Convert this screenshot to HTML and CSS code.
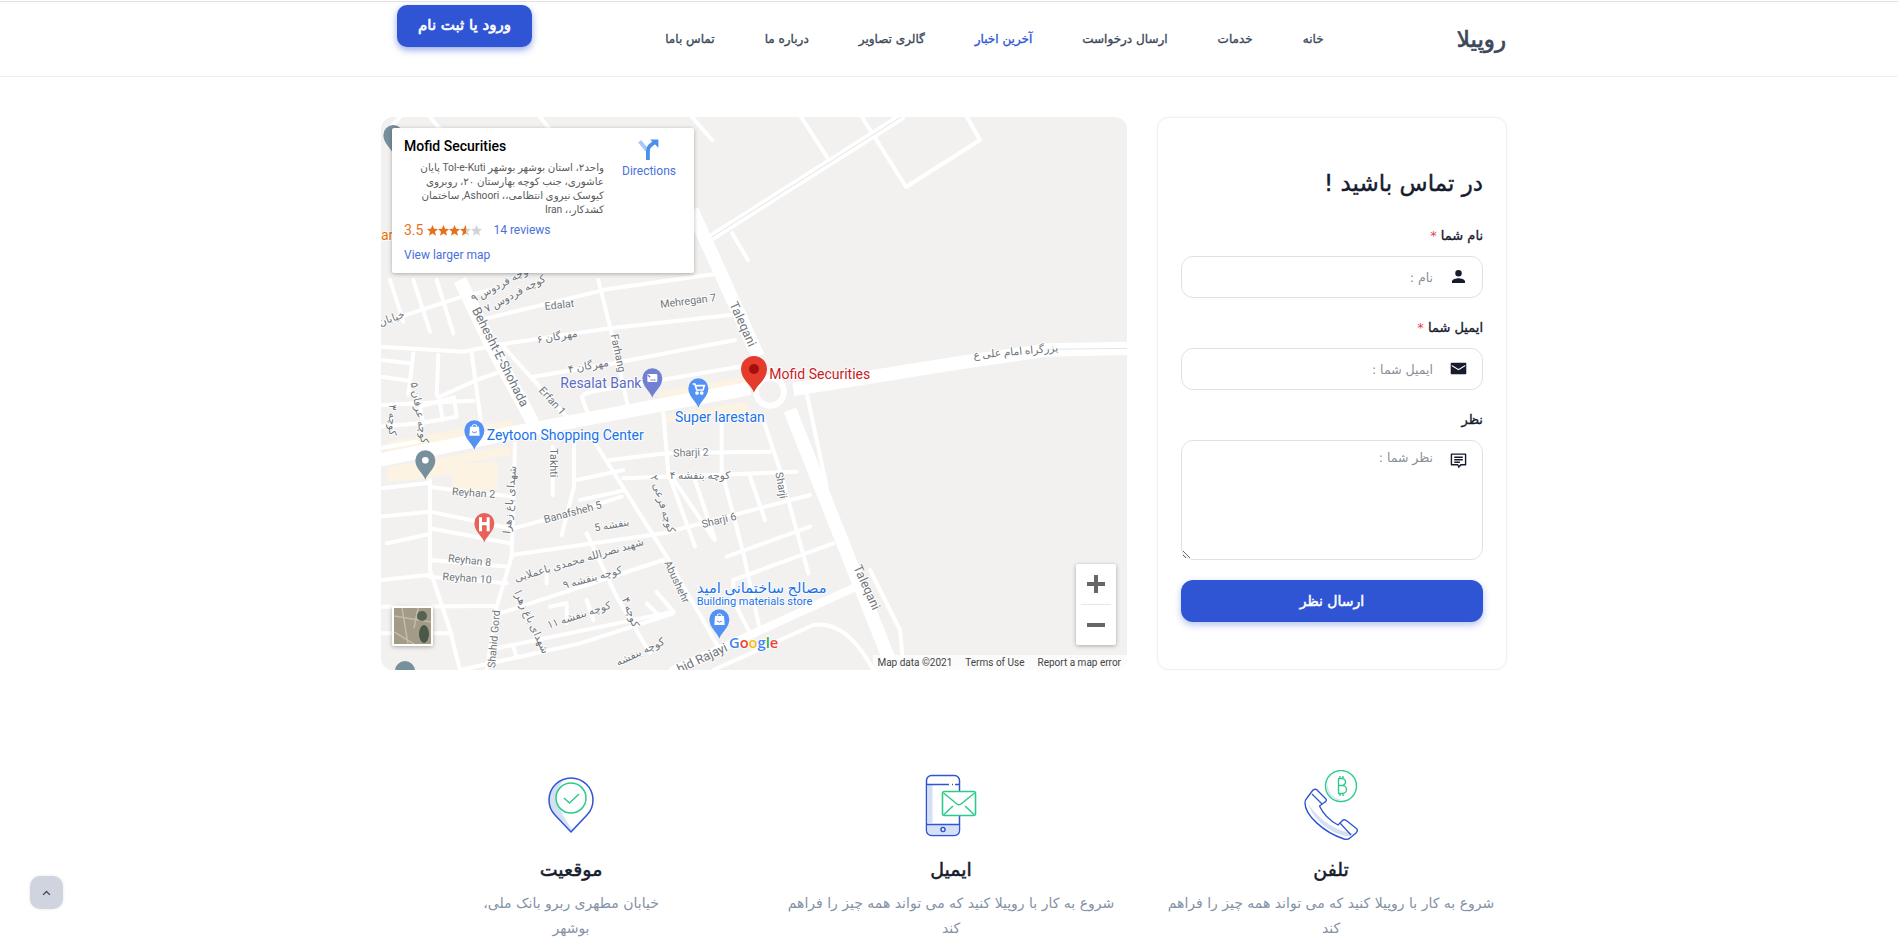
FILE: index.html
```html
<!DOCTYPE html>
<html lang="fa" dir="rtl">
<head>
<meta charset="utf-8">
<title>روپیلا</title>
<link rel="stylesheet" href="styles.css">
</head>
<body>
<header class="header">
  <a class="logo">روپیلا</a>
  <nav class="nav">
    <a>خانه</a><a>خدمات</a><a>ارسال درخواست</a><a class="active">آخرین اخبار</a><a>گالری تصاویر</a><a>درباره ما</a><a>تماس باما</a>
  </nav>
  <button class="login">ورود یا ثبت نام</button>
</header>

<main class="contact">
  <form class="card">
    <h2 class="card-title">در تماس باشید !</h2>
    <label class="field-label">نام شما <span class="req">*</span></label>
    <div class="field">
      <svg class="field-icon" viewBox="0 0 24 24"><path d="M12 12a4.6 4.6 0 1 0 0-9.2A4.6 4.6 0 0 0 12 12zm0 2.3c-3.1 0-9.2 1.5-9.2 4.6v2.3h18.4v-2.3c0-3.1-6.1-4.6-9.2-4.6z"/></svg>
      <input class="control" placeholder="نام :">
    </div>
    <label class="field-label">ایمیل شما <span class="req">*</span></label>
    <div class="field">
      <svg class="field-icon" viewBox="0 0 24 24"><path d="M2 4h20a1 1 0 0 1 1 1v14a1 1 0 0 1-1 1H2a1 1 0 0 1-1-1V5a1 1 0 0 1 1-1zm.5 3.2v1.6l9.5 5.7 9.5-5.7V7.2L12 12.6z"/></svg>
      <input class="control" placeholder="ایمیل شما :">
    </div>
    <label class="field-label">نظر</label>
    <div class="field">
      <svg class="field-icon" viewBox="0 0 24 24"><path fill-rule="evenodd" d="M2 2h20a1 1 0 0 1 1 1v15a1 1 0 0 1-1 1h-6l-4 4-1.500-4H2a1 1 0 0 1-1-1V3a1 1 0 0 1 1-1zm1 2v13h8.500l1 2.500 2.500-2.500h6V4zm3 2.500h12v2H6zm0 3.500h12v2H6zm0 3.500h8v2H6z"/></svg>
      <textarea class="control area" placeholder="نظر شما :"></textarea>
    </div>
    <button class="submit" type="button">ارسال نظر</button>
  </form>

  <section class="map" dir="ltr">
    <svg class="map-svg" viewBox="3 -489 2238 1659" preserveAspectRatio="none">
      <defs>
        <path id="pin" d="M0,88 C-6,70 -30,55 -30,30 A30,30 0 1 1 30,30 C30,55 6,70 0,88Z"/>
      </defs>
      <rect x="3" y="-489" width="2238" height="1659" fill="#f2f1f0"/>

      <g class="cream">
        <polygon points="25,485 392,420 415,440 30,515"/>
        <polygon points="20,562 392,497 392,525 240,552 352,545 352,628 218,628 215,582 90,600 25,605"/>
        <polygon points="836,335 1092,292 1100,312 840,364"/>
        <polygon points="855,405 1102,366 1102,396 860,428"/>
      </g>

      <g class="rd thin">
        <path d="M30,0 L70,125 M100,0 L150,155 M170,0 L220,160"/>
        <path d="M0,130 L240,52 L330,30 M320,115 L680,28 L1020,-20"/>
        <path d="M0,200 L250,215 L350,195 L690,145 L1050,105"/>
        <path d="M460,290 L700,250 L1065,180"/>
        <path d="M610,345 Q620,335 700,325 L1090,258"/>
        <path d="M100,220 L85,345 M175,225 L170,345 M275,220 L302,420"/>
        <path d="M0,240 L90,250 M0,290 L90,302 M0,375 L280,362 M175,352 L290,300 L370,272"/>
        <path d="M0,440 L120,430 L230,410 L222,352 L120,380 L130,430 M180,372 L188,420"/>
        <path d="M0,505 L110,485"/>
        <path d="M370,200 L560,410"/>
        <path d="M655,0 L690,140 L745,385"/>
        <path d="M605,350 L625,405"/>
        <path d="M150,600 L150,870 L210,1050 L240,1170"/>
        <path d="M0,625 L150,608 M155,622 L400,650 M0,710 L150,695 L390,745 M150,745 L390,790 M20,790 L150,762 M150,840 L385,860 M145,890 L380,910 M0,900 L145,885 M0,980 L350,978 M0,1060 L215,1060"/>
        <path d="M405,490 L395,830 L350,980 L320,1170"/>
        <path d="M395,825 L850,760 L1290,645"/>
        <path d="M400,745 L550,705 L725,650 M590,600 L730,570 M600,660 L730,632"/>
        <path d="M582,490 L582,620 L545,765"/>
        <path d="M518,500 L518,645"/>
        <path d="M640,480 L860,830 L1020,1110"/>
        <path d="M690,540 L860,520 L1170,515 M730,595 L1250,575"/>
        <path d="M850,400 L865,580 L945,800 M1025,420 L1025,570 L1090,820 L1140,1050 M1150,420 L1200,570 L1285,880 M875,590 L1000,775 M945,600 L1005,780 M1110,590 L1155,720"/>
        <path d="M1040,830 L1290,740 M1060,900 L1360,790 M1060,900 L1060,960 L1110,1060"/>
        <path d="M360,1000 L850,840 M620,760 L710,950 L810,1120 M350,1105 L880,995 L830,935 M510,980 L560,970 L560,1030 M620,960 L640,1020 M800,970 L840,1010"/>
        <path d="M240,1170 L600,1090 L880,1000"/>
        <path d="M400,1100 L410,1130 M500,880 L500,910"/>
        <path d="M1000,1170 L1300,1035 Q1400,1020 1480,1170"/>
        <path d="M1280,340 L1340,620"/>
        <path d="M1470,870 L1560,1050 L1570,1160"/>
        <path d="M1263,-489 L1341,-369 M1446,-489 L1578,-279 L1800,-420 L1761,-489 M936,-489 L996,-420"/>
        <path d="M1056,-141 L1104,-60"/>
        <path d="M15,-440 L60,-489 M150,-489 L190,-440 M480,-489 L520,-440"/>
        <path d="M780,-70 L930,-110"/>
      </g>

      <g class="rd wide">
        <path d="M0,540 L430,452 L1110,325"/>
        <path d="M240,0 L330,190 L460,430"/>
        <path d="M1230,390 L1540,1170"/>
        <path d="M936,-210 L1135,230"/>
        <path d="M1240,328 L1740,248 L2000,210 L2241,205"/>
      </g>
      <path class="rd mid" d="M880,1170 L1440,915"/>
      <path class="rd mid" d="M1563,-489 L996,-129"/>
      <path class="rd hair" d="M1563,-489 L996,-129 M2000,208 L2241,205"/>
      <circle cx="1170" cy="335" r="42" fill="#f2f1f0" stroke="#fff" stroke-width="18"/>

      <g class="lbl">
        <text x="495" y="90" transform="rotate(-6 495 90)">Edalat</text>
        <text x="842" y="84" transform="rotate(-7 842 84)">Mehregan 7</text>
        <text x="275" y="90" class="big" transform="rotate(63 275 90)">Behesht-E-Shohada</text>
        <text x="1048" y="72" class="big" transform="rotate(66 1048 72)">Taleqani</text>
        <text x="1420" y="862" class="big" transform="rotate(66 1420 862)">Taleqani</text>
        <text x="692" y="165" transform="rotate(78 692 165)">Farhang</text>
        <text x="475" y="332" transform="rotate(48 475 332)">Erfan 1</text>
        <text x="215" y="645" transform="rotate(4 215 645)">Reyhan 2</text>
        <text x="203" y="845" transform="rotate(6 203 845)">Reyhan 8</text>
        <text x="187" y="900" transform="rotate(4 187 900)">Reyhan 10</text>
        <text x="510" y="505" transform="rotate(90 510 505)">Takhti</text>
        <text x="495" y="730" transform="rotate(-15 495 730)">Banafsheh 5</text>
        <text x="880" y="530" transform="rotate(-2 880 530)">Sharji 2</text>
        <text x="968" y="744" transform="rotate(-14 968 744)">Sharji 6</text>
        <text x="1186" y="578" transform="rotate(80 1186 578)">Sharji</text>
        <text x="852" y="848" transform="rotate(65 852 848)">Abushehr</text>
        <text x="345" y="1165" transform="rotate(-85 345 1165)">Shahid Gord</text>
        <text x="1045" y="1112" text-anchor="end" class="big" transform="rotate(-25 1045 1112)">hid Rajayi</text>
        <g text-anchor="middle" direction="rtl">
          <text x="370" y="20" transform="rotate(-28 370 20)">کوچه فردوس ۹</text>
          <text x="410" y="50" transform="rotate(-28 410 50)">کوچه فردوس ۷</text>
          <text x="38" y="125" transform="rotate(-20 38 125)">خیابان</text>
          <text x="533" y="180" transform="rotate(-10 533 180)">مهرگان ۶</text>
          <text x="627" y="268" transform="rotate(-10 627 268)">مهرگان ۴</text>
          <text x="108" y="400" transform="rotate(80 108 400)">کوچه عرفان ۵</text>
          <text x="26" y="420" transform="rotate(90 26 420)">کوچه ۳</text>
          <text x="400" y="660" transform="rotate(-85 400 660)">شهدای باغ زهرا</text>
          <text x="445" y="1030" transform="rotate(65 445 1030)">شهدای باغ زهرا</text>
          <text x="697" y="745" transform="rotate(-10 697 745)">بنفشه 5</text>
          <text x="960" y="597">کوچه بنفشه ۴</text>
          <text x="838" y="675" transform="rotate(72 838 675)">کوچه فرعی ۲</text>
          <text x="600" y="850" transform="rotate(-16 600 850)">شهید نصرالله محمدی باعملایی</text>
          <text x="640" y="903" transform="rotate(-15 640 903)">کوچه بنفشه ۹</text>
          <text x="600" y="1015" transform="rotate(-18 600 1015)">کوچه بنفشه ۱۱</text>
          <text x="742" y="1000" transform="rotate(70 742 1000)">کوچه ۴</text>
          <text x="785" y="1125" transform="rotate(-25 785 1125)">کوچه بنفشه</text>
          <text x="1908" y="225" transform="rotate(-5 1908 225)">بزرگراه امام علی ع</text>
        </g>
      </g>

      <g class="poi">
        <use href="#pin" x="817" y="265" fill="#7180cf"/>
        <use href="#pin" x="955" y="295" fill="#5491f5"/>
        <use href="#pin" x="283" y="421" fill="#5491f5"/>
        <use href="#pin" x="136" y="511" fill="#78909c"/>
        <use href="#pin" x="313" y="699" fill="#e8615a"/>
        <use href="#pin" x="1018" y="988" fill="#5491f5"/>
        <use href="#pin" x="75" y="1143" fill="#78909c"/>
        <use href="#pin" x="40" y="-465" fill="#78909c"/>
        <circle cx="136" cy="541" r="10" fill="#fff"/>
        <path d="M297,712 h9 v14 h14 v-14 h9 v42 h-9 v-18 h-14 v18 h-9z" fill="#fff"/>
        <rect x="802" y="282" width="30" height="24" rx="3" fill="#fff"/>
        <path d="M803,285 l8,7" stroke="#7180cf" stroke-width="4"/>
        <path d="M812,300 h16" stroke="#7180cf" stroke-width="4" stroke-dasharray="3 2"/>
        <path d="M938,312 h7 l5,18 h19 l4,-13 h-24 M951,336 a3,3 0 1 0 .1,0 M965,336 a3,3 0 1 0 .1,0" fill="none" stroke="#fff" stroke-width="5"/>
        <g fill="#fff">
          <path d="M270,440 h27 l2,27 h-31z"/>
          <path d="M1005,1008 h27 l2,27 h-31z"/>
        </g>
        <g fill="none" stroke="#fff" stroke-width="3">
          <path d="M276,441 a7,7 0 0 1 15,0"/>
          <path d="M1011,1009 a7,7 0 0 1 15,0"/>
        </g>
        <g fill="none" stroke="#5491f5" stroke-width="3">
          <path d="M276,455 q7,7 15,0"/>
          <path d="M1011,1023 q7,7 15,0"/>
        </g>
        <path d="M1122,338 C1115,315 1083,300 1083,267 A39,39 0 1 1 1161,267 C1161,300 1129,315 1122,338Z" fill="#e53b2d"/>
        <circle cx="1122" cy="267" r="15" fill="#a30f0c"/>
      </g>

      <g class="plab">
        <text x="541" y="323" fill="#5c6bc0">Resalat Bank</text>
        <text x="885" y="426" fill="#1a73e8">Super larestan</text>
        <text x="320" y="480" fill="#1a73e8">Zeytoon Shopping Center</text>
        <text x="1168" y="296" fill="#c5221f">Mofid Securities</text>
        <text x="1145" y="940" text-anchor="middle" direction="rtl" class="fa" fill="#1a73e8">مصالح ساختمانی امید</text>
        <text x="950" y="974" class="small" fill="#1a73e8">Building materials store</text>
        <text x="3" y="-120" fill="#e8710a">ar</text>
      </g>

      <text class="google" x="1047" y="1104"><tspan fill="#4285f4">G</tspan><tspan fill="#ea4335">o</tspan><tspan fill="#fbbc05">o</tspan><tspan fill="#4285f4">g</tspan><tspan fill="#34a853">l</tspan><tspan fill="#ea4335">e</tspan></text>
    </svg>

    <div class="info">
      <div class="info-main">
        <div class="info-title">Mofid Securities</div>
        <div class="info-addr" dir="rtl">واحد۲، استان بوشهر بوشهر Tol-e-Kuti پایان<br>عاشوری، جنب کوچه بهارستان ۲۰، روبروی<br>کیوسک نیروی انتظامی،، Ashoori, ساختمان<br>کشدکار،، Iran</div>
        <div class="info-rate">
          <span class="score">3.5</span>
          <svg class="stars" viewBox="0 0 55 11">
            <defs>
              <linearGradient id="half"><stop offset="50%" stop-color="#e7711b"/><stop offset="50%" stop-color="#d2d2d2"/></linearGradient>
              <polygon id="st" points="5.500,0 7.100,3.800 11,4.100 8,6.700 9,10.700 5.500,8.500 2,10.700 3,6.700 0,4.100 3.900,3.800"/>
            </defs>
            <use href="#st" fill="#e7711b"/>
            <use href="#st" x="11" fill="#e7711b"/>
            <use href="#st" x="22" fill="#e7711b"/>
            <use href="#st" x="33" fill="url(#half)"/>
            <use href="#st" x="44" fill="#d2d2d2"/>
          </svg>
          <a class="link reviews">14 reviews</a>
        </div>
        <a class="link larger">View larger map</a>
      </div>
      <div class="info-dir">
        <svg class="dir-icon" viewBox="0 0 20 20">
          <path d="M1.500,2 L8,10" stroke="#a8c7fa" stroke-width="3.500" fill="none"/>
          <path d="M9,19 V11 Q9,8 11,6 L15,3" stroke="#4a90ea" stroke-width="3.500" fill="none"/>
          <polygon points="11,0.500 18.500,0.500 18.500,8" fill="#4a90ea"/>
        </svg>
        <a class="link">Directions</a>
      </div>
    </div>

    <div class="thumb">
      <svg viewBox="0 0 37 36" class="thumb-svg">
        <rect width="37" height="36" fill="#a39b88"/>
        <path d="M0,8 L37,14 M8,0 L14,36 M0,24 L20,36 M24,0 L20,20" stroke="#c2bbaa" stroke-width="1.500"/>
        <ellipse cx="28" cy="8" rx="5" ry="5" fill="#566250"/>
        <ellipse cx="30" cy="26" rx="5" ry="9" fill="#4a5848"/>
      </svg>
    </div>

    <div class="zoom">
      <span class="zoom-btn">
        <svg viewBox="0 0 18 18" class="zoom-ico"><path d="M7 0h4v7h7v4h-7v7H7v-7H0V7h7z"/></svg>
      </span>
      <span class="zoom-line"></span>
      <span class="zoom-btn">
        <svg viewBox="0 0 18 18" class="zoom-ico"><path d="M0 7h18v4H0z"/></svg>
      </span>
    </div>

    <div class="attr"><span>Map data ©2021</span><span>Terms of Use</span><span>Report a map error</span></div>
  </section>
</main>

<section class="features">
  <article class="feature">
    <svg class="f-icon" viewBox="0 0 70 70">
      <circle cx="45" cy="16" r="15.500" fill="#fff" stroke="#2eca8b" stroke-width="1.400"/>
      <path d="M31.500,13 C31,22 38,30 48,30 C40,32 28,25 31.500,13Z" fill="#d6e0f5"/>
      <path d="M42,8.500 h4 a3.200,3.200 0 0 1 0,7 h-4 M46,15.500 h.5 a3.800,3.800 0 0 1 0,8 h-4.500 M42.500,8.500 v15 M44,6 v2.500 M47,6 v2.500 M44,23.500 v2.500 M47,23.500 v2.500" fill="none" stroke="#2eca8b" stroke-width="1.400"/>
      <g transform="translate(2 0)">
        <path d="M9,28 L15,20 Q18,18 20,21 L28,29 Q29,31 27,32 L21.500,36 Q27,48 40,55 L45,50 Q47,49 49,51 L59,59 Q60,61 58,63 L52,68 Q50,70 46,69 C25,62 7,45 7,33 Q7,30 9,28Z" fill="#fff" stroke="#2f55d4" stroke-width="1.400" stroke-linejoin="round"/>
        <path d="M10,33 C14,48 30,62 47,66 C52,67 54,65 55,63 C40,62 20,50 10,33Z" fill="#d6e0f5"/>
        <path d="M14,24 L24,34 M42,53 L53,65" stroke="#2f55d4" stroke-width="1.200"/>
      </g>
    </svg>
    <h3 class="f-title">تلفن</h3>
    <p class="f-text">شروع به کار با روپیلا کنید که می تواند همه چیز را فراهم کند</p>
  </article>
  <article class="feature">
    <svg class="f-icon" viewBox="0 0 70 70">
      <rect x="10.500" y="5.500" width="33" height="60" rx="5" fill="#fff" stroke="#2f55d4" stroke-width="1.500"/>
      <path d="M11.500,15 h5 v38 h-5z M11.500,55 h31 v5 q0,4 -4,4 h-23 q-4,0 -4,-4z" fill="#d6e0f5"/>
      <path d="M11,14.500 H33 M36,14.500 H37 M39,14.500 H43 M11,54.500 H43" stroke="#2f55d4" stroke-width="1.500"/>
      <circle cx="27" cy="59.500" r="2" fill="#fff" stroke="#2f55d4" stroke-width="1.500"/>
      <rect x="26.500" y="21.500" width="33" height="24" rx="2" fill="#fff" stroke="#2eca8b" stroke-width="1.600"/>
      <path d="M27.500,23 L41,34 Q43,35.500 45,34 L58.500,23 M28,44.500 L37,36 M58,44.500 L49,36" fill="none" stroke="#2eca8b" stroke-width="1.500"/>
    </svg>
    <h3 class="f-title">ایمیل</h3>
    <p class="f-text">شروع به کار با روپیلا کنید که می تواند همه چیز را فراهم کند</p>
  </article>
  <article class="feature">
    <svg class="f-icon" viewBox="0 0 70 70">
      <path d="M35,62 L19,45 A22,22 0 1 1 51,45 Z" fill="#d6e0f5"/>
      <path d="M36,59 L50,45 A21,21 0 0 0 34,8 C24,10 19,22 22,33 C24,42 30,50 36,59Z" fill="#fff"/>
      <path d="M35,62 L19,45 A22,22 0 1 1 51,45 Z" fill="none" stroke="#2f55d4" stroke-width="1.500" stroke-linejoin="round"/>
      <circle cx="35" cy="28" r="15" fill="#fff" stroke="#2eca8b" stroke-width="1.500"/>
      <path d="M28,28 L33.500,33 L43,24" fill="none" stroke="#2eca8b" stroke-width="1.500"/>
    </svg>
    <h3 class="f-title">موقعیت</h3>
    <p class="f-text">خیابان مطهری ربرو بانک ملی،<br>بوشهر</p>
  </article>
</section>

<a class="top-btn">
  <svg viewBox="0 0 12 8" class="top-ico"><path d="M1.500 6.500 L6 2 L10.500 6.500"/></svg>
</a>
</body>
</html>
```

FILE: styles.css
```css
* { box-sizing: border-box; }
html, body { height: 939px; overflow: hidden; }
body {
  margin: 0;
  background: #fff;
  color: #161c2d;
  font-family: "DejaVu Sans", "Noto Sans", sans-serif;
}
a { text-decoration: none; }
.header {
  display: flex;
  justify-content: space-between;
  align-items: center;
  height: 76px;
  margin-top: 1px;
  padding: 0 392px 0 397px;
  border-top: 1px solid #e2e2e2;
  border-bottom: 1px solid #eeeff1;
}
.logo { font-size: 23px; font-weight: 400; color: #3c4858; -webkit-text-stroke: .7px #3c4858; }
.nav { display: flex; gap: 50px; }
.nav a { font-size: 12px; color: #3c4858; -webkit-text-stroke: .35px #3c4858; }
.nav a.active { color: #2f55d4; -webkit-text-stroke-color: #2f55d4; }
.login {
  align-self: flex-start;
  width: 135px;
  height: 42px;
  margin-top: 3px;
  padding-bottom: 3px;
  border: 0;
  border-radius: 10px;
  background: #2f55d4;
  box-shadow: 0 3px 7px rgba(47, 85, 212, .5);
  color: #fff;
  font: 400 15px "DejaVu Sans", sans-serif;
  -webkit-text-stroke: .6px #fff;
}
.contact {
  display: flex;
  gap: 30px;
  width: 1126px;
  margin: 40px 391px 0 381px;
}
.card {
  display: flex;
  flex-direction: column;
  width: 350px;
  height: 553px;
  padding: 49px 23px 0;
  border: 1px solid #f0f1f3;
  border-radius: 12px;
  box-shadow: 0 0 2px rgba(60, 72, 88, .08);
}
.card-title { margin: 0 0 27px; font-size: 23px; font-weight: 400; line-height: 32px; -webkit-text-stroke: .4px #161c2d; }
.field-label { font-size: 13px; line-height: 20px; margin-bottom: 10px; -webkit-text-stroke: .35px #161c2d; }
.req { color: #e43f52; -webkit-text-stroke: 0; }
.field { position: relative; margin-bottom: 20px; }
.field-icon { position: absolute; top: 12px; right: 16px; width: 17px; height: 17px; fill: #161c2d; }
.control {
  display: block;
  width: 100%;
  height: 42px;
  padding: 0 49px 0 12px;
  border: 1px solid #dee2e6;
  border-radius: 12px;
  outline: 0;
  font: 12.500px "DejaVu Sans", sans-serif;
}
.control::placeholder { color: #8a8f98; opacity: 1; }
.area { height: 120px; padding-top: 9px; }
.submit {
  height: 42px;
  border: 0;
  border-radius: 12px;
  background: #2f55d4;
  box-shadow: 0 3px 7px rgba(47, 85, 212, .35);
  color: #fff;
  font: 400 14px "DejaVu Sans", sans-serif;
  -webkit-text-stroke: .5px #fff;
}
.map {
  position: relative;
  width: 746px;
  height: 553px;
  overflow: hidden;
  border-radius: 12px;
  font-family: Roboto, "DejaVu Sans", sans-serif;
}
.map-svg { display: block; width: 746px; height: 553px; font-family: Roboto, "DejaVu Sans", sans-serif; }
.cream polygon { fill: #fdf3e2; }
.rd { fill: none; stroke: #fff; stroke-linecap: round; stroke-linejoin: round; }
.thin { stroke-width: 12; }
.wide { stroke-width: 40; stroke-linecap: butt; }
.mid { stroke-width: 24; }
.hair { stroke: #e4e4e4; stroke-width: 3; }
.lbl text { font-size: 32px; fill: #70757a; paint-order: stroke; stroke: #fff; stroke-width: 5px; }
.lbl text.big { font-size: 38px; }
.plab text { font-size: 42px; paint-order: stroke; stroke: #fff; stroke-width: 5px; }
.plab text.small { font-size: 33px; }
.plab text.fa { font-size: 44px; }
.google { font: 600 44px "Open Sans", sans-serif; paint-order: stroke; stroke: #fff; stroke-width: 4px; }
.info {
  position: absolute;
  top: 11px;
  left: 11px;
  display: flex;
  width: 302px;
  height: 145px;
  background: #fff;
  box-shadow: 0 1px 4px rgba(0, 0, 0, .3);
  border-radius: 2px;
}
.info-main { width: 212px; padding: 10px 0 0 12px; }
.info-title { font-size: 14px; font-weight: 500; line-height: 16px; color: #000; }
.info-addr { margin-top: 7px; font-size: 10.300px; line-height: 14px; color: #5b5b5b; white-space: nowrap; }
.info-rate { display: flex; align-items: center; margin-top: 4px; height: 18px; }
.score { font-size: 14px; color: #e7711b; margin-left: 0; }
.stars { width: 55px; height: 11px; margin-left: 4px; }
.link { color: #4a6fdc; font-size: 12px; }
.reviews { margin-left: 11px; }
.larger { display: block; margin-top: 9px; }
.info-dir { display: flex; flex-direction: column; align-items: center; width: 90px; padding: 11px 0 0 0; }
.dir-icon { width: 22px; height: 22px; margin-bottom: 3px; }
.thumb {
  position: absolute;
  left: 11px;
  bottom: 24px;
  width: 41px;
  height: 40px;
  border: 2px solid #fff;
  border-radius: 2px;
  box-shadow: 0 1px 4px rgba(0, 0, 0, .3);
}
.thumb-svg { display: block; width: 100%; height: 100%; }
.zoom {
  position: absolute;
  top: 447px;
  left: 695px;
  display: flex;
  flex-direction: column;
  align-items: center;
  width: 40px;
  height: 81px;
  background: #fff;
  box-shadow: 0 1px 4px rgba(0, 0, 0, .3);
  border-radius: 2px;
}
.zoom-btn { display: flex; align-items: center; justify-content: center; width: 40px; height: 40px; }
.zoom-ico { width: 18px; height: 18px; fill: #666; }
.zoom-line { display: block; width: 30px; height: 1px; background: #e6e6e6; }
.attr {
  position: absolute;
  right: 0;
  bottom: 0;
  display: flex;
  gap: 13px;
  height: 15px;
  padding: 0 6px 0 4px;
  background: rgba(255, 255, 255, .7);
  font-size: 10px;
  line-height: 15px;
  color: #444;
}
.features {
  display: grid;
  grid-template-columns: repeat(3, 380px);
  width: 1140px;
  margin: 100px 377px 0 381px;
}
.feature { padding: 0 24px; text-align: center; }
.f-icon { display: block; width: 70px; height: 70px; margin: 0 auto; }
.f-title { margin: 16px 0 8px; font-size: 19px; font-weight: 400; line-height: 27px; -webkit-text-stroke: .5px #161c2d; }
.f-text { margin: 0; font-size: 14px; line-height: 25px; color: #8492a6; }
.top-btn {
  position: fixed;
  left: 30px;
  bottom: 30px;
  display: flex;
  align-items: center;
  justify-content: center;
  width: 33px;
  height: 33px;
  border-radius: 10px;
  background: #cfd4de;
  box-shadow: 0 0 3px rgba(60, 72, 88, .15);
}
.top-ico { width: 9px; height: 6px; fill: none; stroke: #3c4858; stroke-width: 1.800; }
```
